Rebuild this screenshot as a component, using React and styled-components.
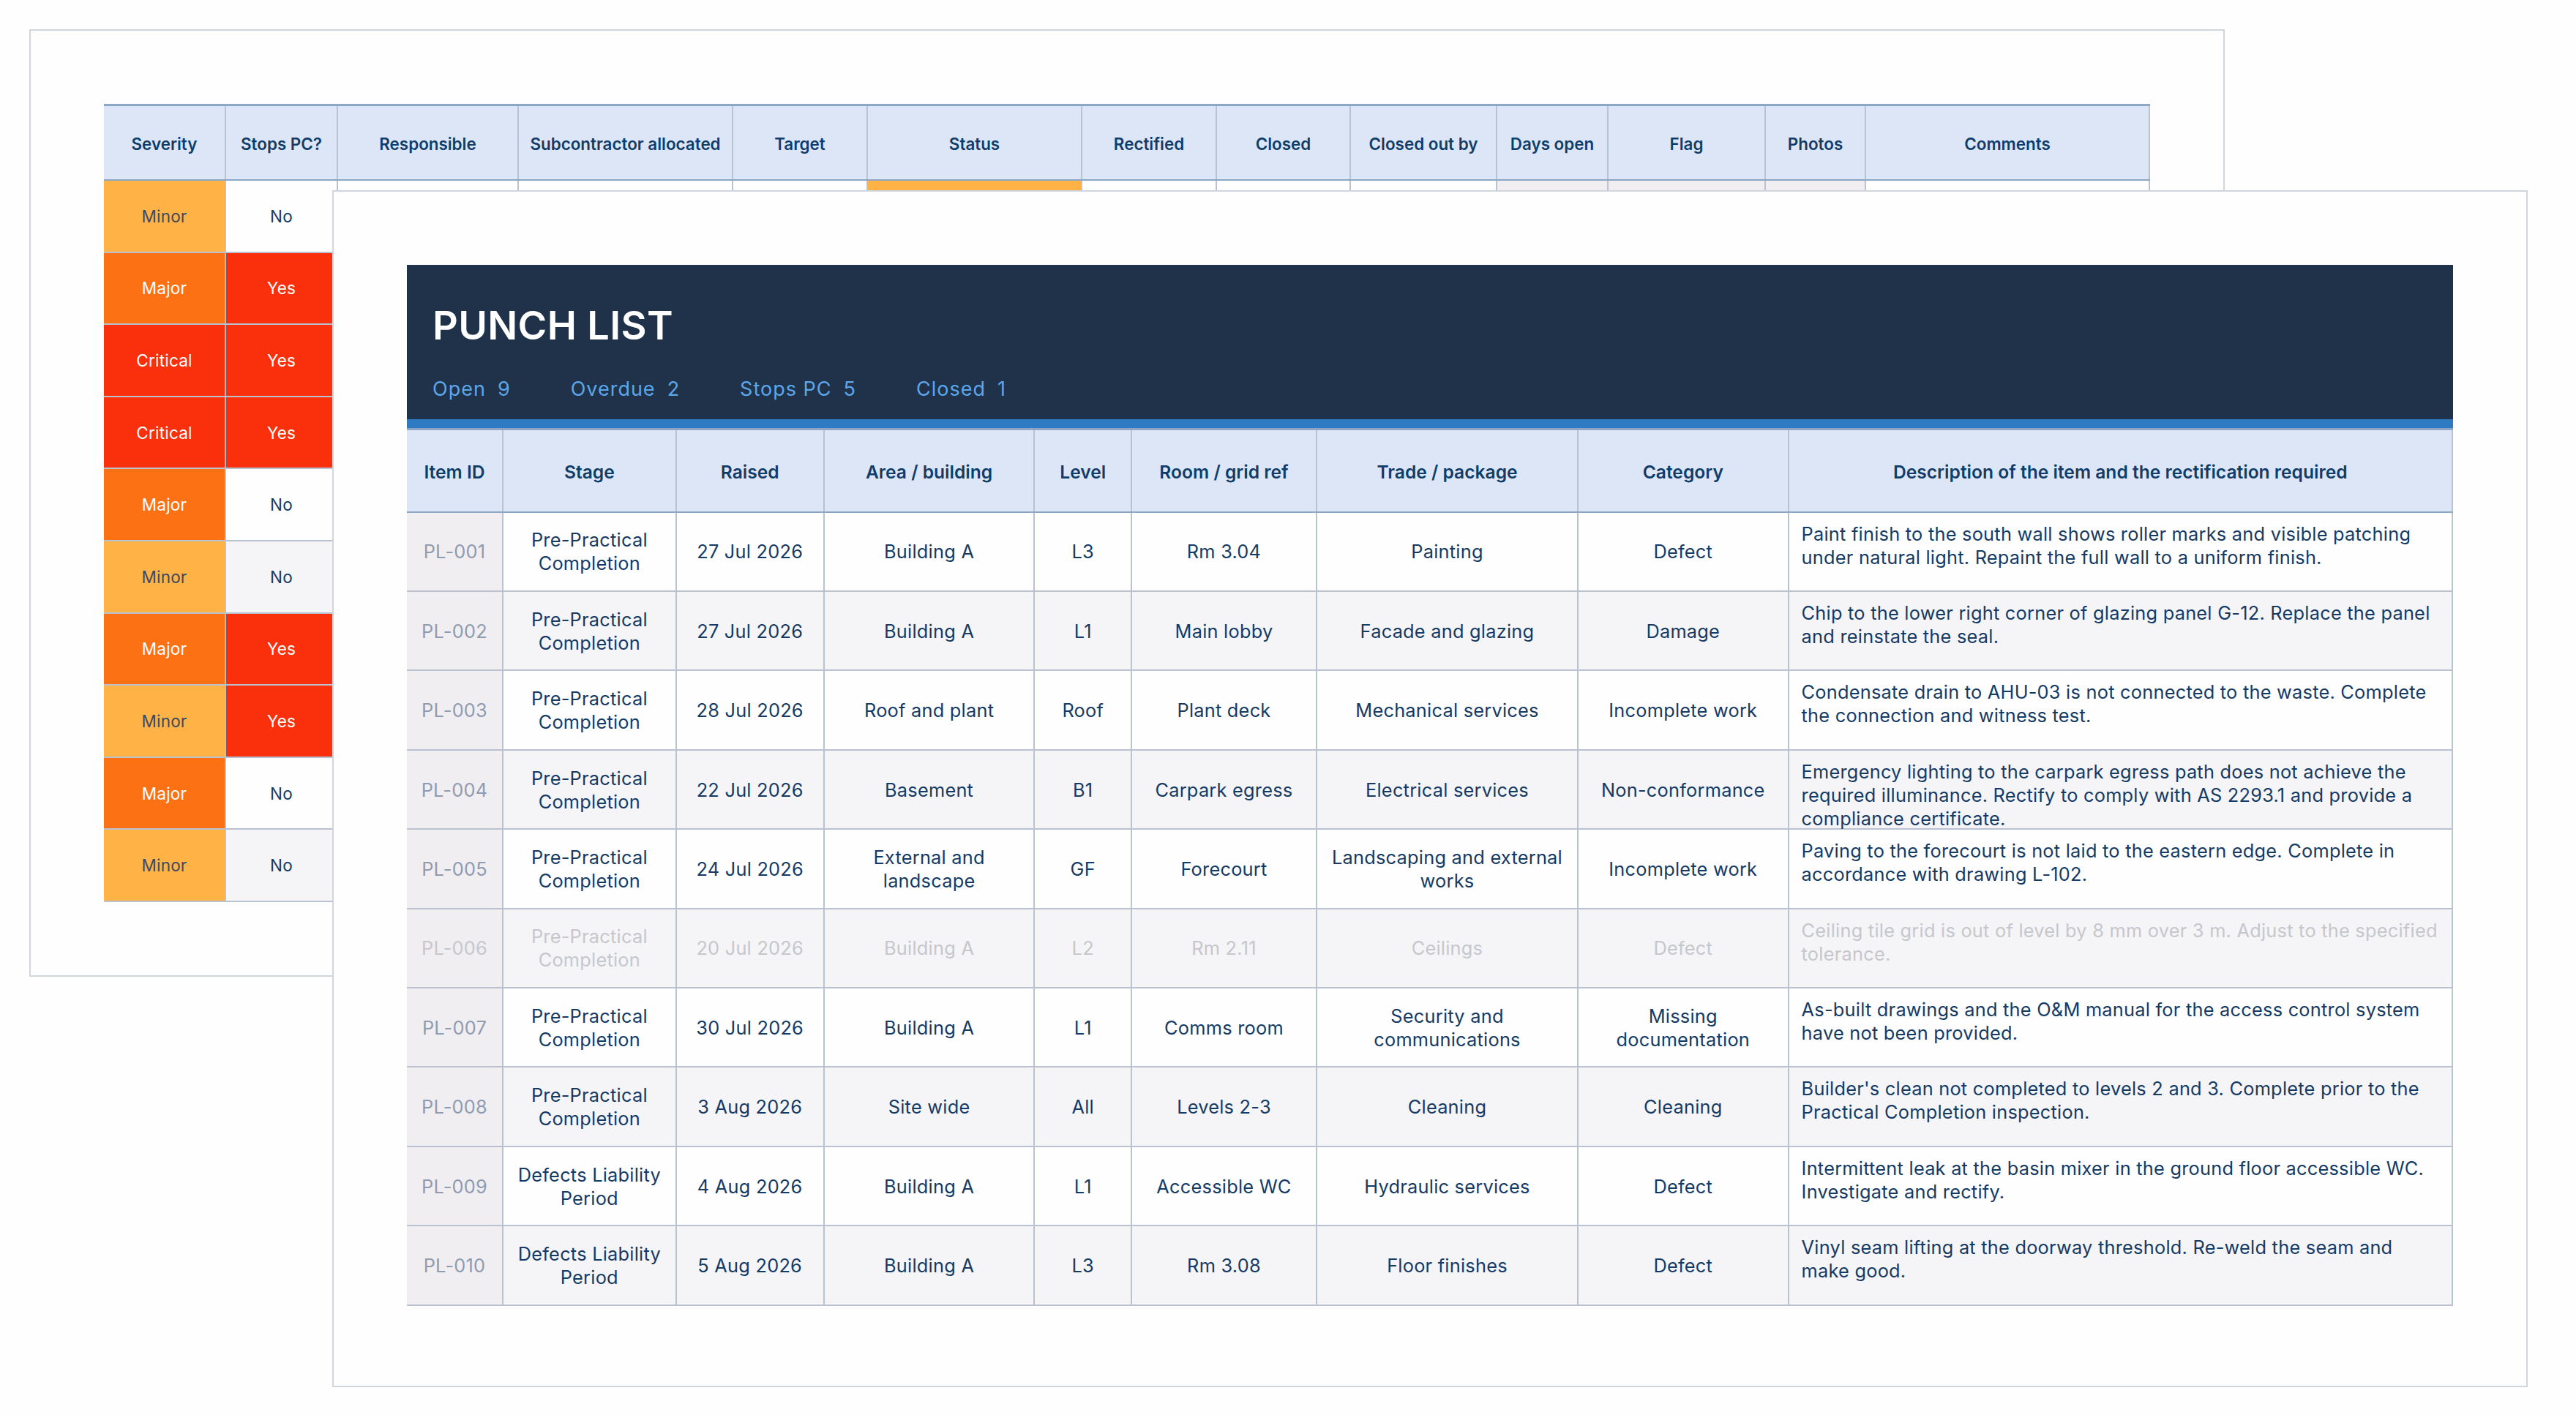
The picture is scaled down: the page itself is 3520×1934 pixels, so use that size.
import React from 'react';
import styled, { createGlobalStyle } from 'styled-components';

const GlobalStyle = createGlobalStyle`
  html, body {
    margin: 0;
    background: #fefefe;
    font-family: Inter, "Noto Sans", sans-serif;
  }
`;

const backColumns = [167, 153, 247, 293, 184, 293, 184, 183, 200, 152, 215, 137, 388];
const frontColumns = [132, 236.7, 202, 287.8, 132.5, 253, 357, 287.6, 907.4];

const backHeaders = [
  'Severity', 'Stops PC?', 'Responsible', 'Subcontractor allocated', 'Target', 'Status',
  'Rectified', 'Closed', 'Closed out by', 'Days open', 'Flag', 'Photos', 'Comments',
];

const backRows = [
  ['Minor', 'No'], ['Major', 'Yes'], ['Critical', 'Yes'], ['Critical', 'Yes'], ['Major', 'No'],
  ['Minor', 'No'], ['Major', 'Yes'], ['Minor', 'Yes'], ['Major', 'No'], ['Minor', 'No'],
];

const frontHeaders = [
  'Item ID', 'Stage', 'Raised', 'Area / building', 'Level', 'Room / grid ref',
  'Trade / package', 'Category', 'Description of the item and the rectification required',
];

const PC = 'Pre-Practical Completion';
const DLP = 'Defects Liability Period';

const items = [
  ['PL-001', PC, '27 Jul 2026', 'Building A', 'L3', 'Rm 3.04', 'Painting', 'Defect', 'Paint finish to the south wall shows roller marks and visible patching under natural light. Repaint the full wall to a uniform finish.'],
  ['PL-002', PC, '27 Jul 2026', 'Building A', 'L1', 'Main lobby', 'Facade and glazing', 'Damage', 'Chip to the lower right corner of glazing panel G-12. Replace the panel and reinstate the seal.'],
  ['PL-003', PC, '28 Jul 2026', 'Roof and plant', 'Roof', 'Plant deck', 'Mechanical services', 'Incomplete work', 'Condensate drain to AHU-03 is not connected to the waste. Complete the connection and witness test.'],
  ['PL-004', PC, '22 Jul 2026', 'Basement', 'B1', 'Carpark egress', 'Electrical services', 'Non-conformance', 'Emergency lighting to the carpark egress path does not achieve the required illuminance. Rectify to comply with AS 2293.1 and provide a compliance certificate.'],
  ['PL-005', PC, '24 Jul 2026', 'External and landscape', 'GF', 'Forecourt', 'Landscaping and external works', 'Incomplete work', 'Paving to the forecourt is not laid to the eastern edge. Complete in accordance with drawing L-102.'],
  ['PL-006', PC, '20 Jul 2026', 'Building A', 'L2', 'Rm 2.11', 'Ceilings', 'Defect', 'Ceiling tile grid is out of level by 8 mm over 3 m. Adjust to the specified tolerance.'],
  ['PL-007', PC, '30 Jul 2026', 'Building A', 'L1', 'Comms room', 'Security and communications', 'Missing documentation', 'As-built drawings and the O&M manual for the access control system have not been provided.'],
  ['PL-008', PC, '3 Aug 2026', 'Site wide', 'All', 'Levels 2-3', 'Cleaning', 'Cleaning', "Builder's clean not completed to levels 2 and 3. Complete prior to the Practical Completion inspection."],
  ['PL-009', DLP, '4 Aug 2026', 'Building A', 'L1', 'Accessible WC', 'Hydraulic services', 'Defect', 'Intermittent leak at the basin mixer in the ground floor accessible WC. Investigate and rectify.'],
  ['PL-010', DLP, '5 Aug 2026', 'Building A', 'L3', 'Rm 3.08', 'Floor finishes', 'Defect', 'Vinyl seam lifting at the doorway threshold. Re-weld the seam and make good.'],
];

const stats = [['Open', 9], ['Overdue', 2], ['Stops PC', 5], ['Closed', 1]];

const severityTones = {
  Minor: { bg: '#ffb347', fg: '#3a4a64' },
  Major: { bg: '#fd7115', fg: '#ffffff' },
  Critical: { bg: '#fa2f0c', fg: '#ffffff' },
};

const App = () => {
  return (
    <>
      <GlobalStyle />
      <Desk>
        <BackSheet>
          <HeaderRow $columns={backColumns} $height={105}>
            {backHeaders.map((title) => (
              <HeaderCell key={title} $size={22.4}>{title}</HeaderCell>
            ))}
          </HeaderRow>
          {backRows.map(([severity, stops], row) => (
            <BackRow key={row} $columns={backColumns}>
              <BackCell $bg={severityTones[severity].bg} $fg={severityTones[severity].fg}>{severity}</BackCell>
              <BackCell
                $bg={stops === 'Yes' ? '#fa2f0c' : row % 2 ? '#f5f4f7' : '#fefefe'}
                $fg={stops === 'Yes' ? '#ffffff' : '#143a66'}
              >
                {stops}
              </BackCell>
              {backHeaders.slice(2).map((title, col) => (
                <BackCell
                  key={title}
                  $bg={title === 'Status' && row === 0 ? '#ffb347' : col >= 7 && col <= 9 ? '#f0eef1' : '#fefefe'}
                />
              ))}
            </BackRow>
          ))}
        </BackSheet>

        <FrontSheet>
          <Banner>
            <Title>PUNCH LIST</Title>
            <Stats>
              {stats.map(([label, value]) => (
                <Stat key={label}>
                  <span>{label}</span>
                  <span>{value}</span>
                </Stat>
              ))}
            </Stats>
          </Banner>
          <AccentBar />
          <HeaderRow $columns={frontColumns} $height={115.7}>
            {frontHeaders.map((title) => (
              <HeaderCell key={title} $size={24.6}>{title}</HeaderCell>
            ))}
          </HeaderRow>
          {items.map((item, row) => (
            <ItemRow key={item[0]} $columns={frontColumns} $striped={row % 2 === 1} $faded={item[0] === 'PL-006'}>
              <IdCell $faded={item[0] === 'PL-006'}>{item[0]}</IdCell>
              {item.slice(1, 8).map((value, col) => (
                <ItemCell key={col}>{value}</ItemCell>
              ))}
              <DescriptionCell>{item[8]}</DescriptionCell>
            </ItemRow>
          ))}
        </FrontSheet>
      </Desk>
    </>
  );
};

export default App;

const Desk = styled.div`
  position: relative;
  width: 3520px;
  height: 1934px;
  overflow: hidden;
`;

const Sheet = styled.section`
  position: absolute;
  box-sizing: border-box;
  width: 3000px;
  padding: 100px;
  background: #fefefe;
  border: 2px solid #d0d5de;
`;

const BackSheet = styled(Sheet)`
  left: 40px;
  top: 40px;
  height: 1295px;
`;

const FrontSheet = styled(Sheet)`
  left: 454px;
  top: 260px;
  height: 1636px;
`;

const Banner = styled.header`
  box-sizing: border-box;
  height: 211px;
  padding: 50px 35px 0;
  background: #1f3249;
`;

const Title = styled.h1`
  margin: 0;
  font-size: 54px;
  line-height: 66px;
  font-weight: 600;
  letter-spacing: 0.35px;
  color: #ffffff;
`;

const Stats = styled.div`
  display: flex;
  gap: 82px;
  margin-top: 37px;
`;

const Stat = styled.div`
  display: flex;
  gap: 16px;
  font-size: 27px;
  line-height: 34px;
  letter-spacing: 1px;
  color: #5ca6ea;
`;

const AccentBar = styled.div`
  height: 12px;
  background: #2f7bc3;
`;

const Row = styled.div`
  display: grid;
  grid-template-columns: ${({ $columns }) => $columns.map((w) => `${w}px`).join(' ')};
  grid-template-rows: minmax(0, 1fr);
`;

const HeaderRow = styled(Row)`
  box-sizing: border-box;
  height: ${({ $height }) => $height}px;
  background: #dde6f6;
  border-top: 3px solid #8ea6c6;
  border-bottom: 2px solid #8ea6c6;
`;

const HeaderCell = styled.div`
  box-sizing: border-box;
  display: flex;
  align-items: center;
  justify-content: center;
  padding-top: 3px;
  border-right: 2px solid #bac2d1;
  font-size: ${({ $size }) => $size}px;
  font-weight: 600;
  color: #0f3d6b;
  white-space: nowrap;
`;

const BackRow = styled(Row)`
  height: 98.6px;
`;

const BackCell = styled.div`
  box-sizing: border-box;
  display: flex;
  align-items: center;
  justify-content: center;
  background: ${({ $bg }) => $bg};
  color: ${({ $fg }) => $fg || '#143a66'};
  border-right: 2px solid #bac2d1;
  border-bottom: 2px solid #bac2d1;
  font-size: 22.5px;
  letter-spacing: 0.2px;
`;

const ItemRow = styled(Row)`
  height: 108.4px;
  background: ${({ $striped }) => ($striped ? '#f5f4f7' : '#fefefe')};
  color: ${({ $faded }) => ($faded ? '#c6c7cc' : '#143a66')};
  font-size: 25.33px;
  line-height: 32px;
  letter-spacing: 0.25px;
`;

const ItemCell = styled.div`
  box-sizing: border-box;
  min-height: 0;
  display: flex;
  align-items: center;
  justify-content: center;
  padding: 1px 16px 0;
  text-align: center;
  border-right: 2px solid #bac2d1;
  border-bottom: 2px solid #bac2d1;
`;

const IdCell = styled(ItemCell)`
  background: #f0eef1;
  color: ${({ $faded }) => ($faded ? '#c6c7cc' : '#8f9bb0')};
`;

const DescriptionCell = styled(ItemCell)`
  display: block;
  padding: 13px 18px 0 17px;
  text-align: left;
`;
